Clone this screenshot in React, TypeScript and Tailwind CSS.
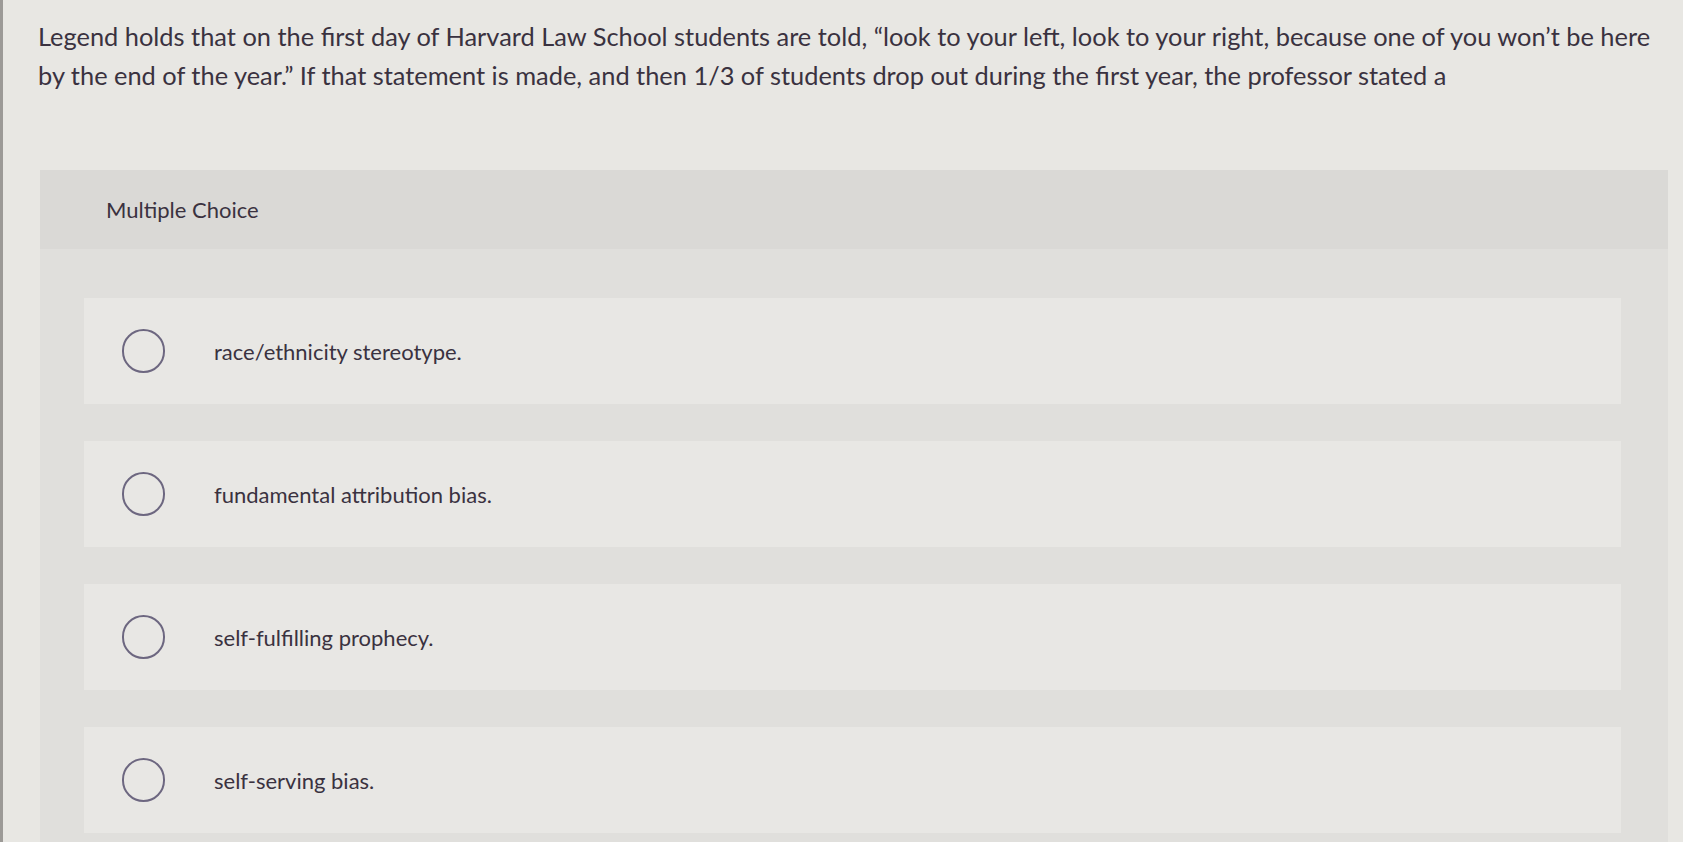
import React from "react";

const options = [
  "race/ethnicity stereotype.",
  "fundamental attribution bias.",
  "self-fulfilling prophecy.",
  "self-serving bias.",
];

export default function App() {
  return (
    <div
      className="w-full h-[842px] overflow-hidden bg-[#e8e7e3] border-l-[3px] border-[#9c9a97] text-[#3a3240] flex flex-col"
      style={{ fontFamily: "Lato, 'Noto Sans', sans-serif" }}
    >
      <p className="pl-[35px] pt-[17px] text-[25.4px] leading-[38.5px] whitespace-nowrap">
        Legend holds that on the first day of Harvard Law School students are told, “look to your left, look to your right, because one of you won’t be here
        <br />
        by the end of the year.” If that statement is made, and then 1/3 of students drop out during the first year, the professor stated a
      </p>
      <div className="mt-[76px] ml-[37px] mr-[15px] bg-[#e0dfdc] flex-1">
        <div className="h-[79px] flex items-center pl-[66px] bg-[#dad9d6] text-[22px]">
          Multiple Choice
        </div>
        <div className="pt-[49px] pl-[44px] pr-[47px] flex flex-col gap-[37px]">
          {options.map((o) => (
            <div key={o} className="h-[106px] bg-[#e8e7e4] flex items-center pl-[38px]">
              <div className="w-[43px] h-[44px] rounded-full border-2 border-[#6d6780] shrink-0" />
              <span className="ml-[49px] text-[22px]">{o}</span>
            </div>
          ))}
        </div>
      </div>
    </div>
  );
}
